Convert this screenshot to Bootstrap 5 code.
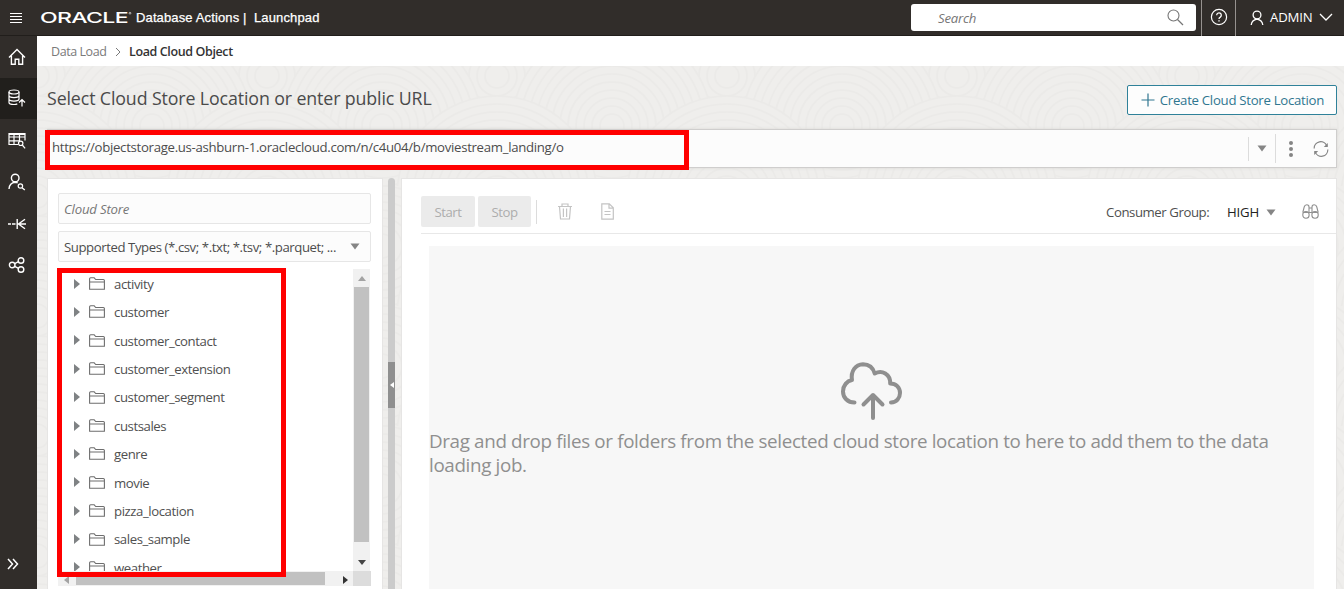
<!DOCTYPE html>
<html lang="en">
<head>
<meta charset="utf-8">
<meta name="viewport" content="width=device-width, initial-scale=1">
<title>Load Cloud Object</title>
<link href="https://cdn.jsdelivr.net/npm/bootstrap@5.3.0/dist/css/bootstrap.min.css" rel="stylesheet">
<style>
  body { font: 13.2px/20px "Open Sans", "Noto Sans", sans-serif; letter-spacing: -.43px; color: #4c4c4c; background: #efeeec; height: 589px; overflow: hidden; }
  svg { display: block; flex: none; fill: none; stroke: currentColor; }
  .topbar { height: 36px; background: #312d2a; color: #fff; border-bottom: 1px solid #211e1b; }
  .brand-text { font: 13px/16px "Liberation Sans", Arial, sans-serif; letter-spacing: .13px; white-space: pre; -webkit-text-stroke: .25px #fff; }
  .search { width: 285px; height: 27px; background: #fff; border-radius: 3px; padding: 0 12px 0 27px; color: #767676; letter-spacing: -.2px; }
  .topcell { border-left: 1px solid #96928f; height: 36px; }
  .rail { width: 37px; background: #312d2a; color: #fff; padding-bottom: 15px; }
  .rail-item { height: 41.6px; padding-right: 4px; }
  .rail-item.current { background: #211f1c; }
  .crumbs { height: 30px; background: #fff; padding-left: 14px; color: #7a7a7a; font-size: 12.5px; line-height: 30px; padding-top: 2px; }
  .crumb-now { color: #333; font-weight: 600; letter-spacing: -.38px; }
  .stage { position: relative; padding: 0 7px 0 10px; }
  .texture { position: absolute; inset: 0; width: 100%; height: 100%; stroke: #ebeae8; z-index: -1; }
  .page-title { font-size: 17.8px; font-weight: 400; line-height: 26px; color: #4a4a4a; margin: 0; letter-spacing: -.12px; }
  .btn-create { width: 210px; height: 30px; border: 1px solid #2f8199; border-radius: 2px; background: #fdfdfd; color: #2f7690; padding: 0 12px 0 13px; font-size: 13.2px; line-height: 20px; letter-spacing: -.28px; }
  .urlbar { position: relative; height: 39px; background: #fcfcfc; border: 1px solid #cfcecd; box-shadow: 0 0 3px #d9d8d6; padding-left: 4px; }
  .url-text { letter-spacing: -.3px; margin-bottom: 3px; }
  .mark-url, .mark-tree { position: absolute; border: 5px solid #f00; pointer-events: none; }
  .mark-url { left: -3px; top: 0; width: 644px; height: 40px; }
  .mark-tree { left: -1px; top: -1px; width: 229px; height: 309px; }
  .rule-v { width: 1px; background: #dcdcdc; }
  .panel { background: #fff; border: 1px solid #e6e5e4; border-bottom: 0; }
  .panel-left { width: 336px; padding: 14px 11px 0 10px; }
  .field { height: 31px; border: 1px solid #e6e6e6; border-radius: 2px; background: #fcfcfc; padding: 0 5px; }
  .tree { position: relative; height: 317px; }
  .tree-list { height: 302px; overflow: hidden; width: 295px; padding-top: .4px; }
  .tree-row { height: 28.4px; padding-left: 16px; color: #505050; }
  .tree-name { padding-top: .6px; }
  .vbar { width: 17px; height: 302px; background: #f1f1f1; color: #a3a3a3; }
  .vthumb { width: 15px; height: 255px; background: #c1c1c1; }
  .hbar { height: 15px; background: #f1f1f1; }
  .hthumb { width: 249px; height: 13px; background: #c1c1c1; }
  .hcorner { width: 18px; height: 15px; background: #dcdcdc; }
  .splitter { width: 7px; background: #cbcbcb; border-radius: 4px 4px 0 0; padding-top: 184px; }
  .grip { height: 46px; background: #8f8f8f; color: #fff; }
  .panel-right { padding-left: 19px; }
  .tools { height: 55px; padding-top: 17px; border-bottom: 1px solid #e8e8e8; }
  .btn-off, .btn-off:disabled { height: 31px; border: 0; border-radius: 2px; padding: 0; background: #ebebeb; color: #adadad; opacity: 1; font-size: 13.2px; line-height: 20px; letter-spacing: -.43px; }
  .dropzone { width: 885px; background: #f7f7f7; margin: 12px 0 0 8px; padding-top: 115px; }
  .drop-text { font-size: 18.8px; line-height: 24px; color: #8f8f8f; letter-spacing: -.34px; }
</style>
</head>
<body class="d-flex flex-column">

<header class="topbar d-flex align-items-center flex-shrink-0">
  <svg width="12" height="12" viewBox="0 0 12 12" style="margin-left:10px"><path d="M0 1.500h12M0 4.500h12M0 7.500h12M0 10.500h12" stroke-width="1.100"/></svg>
  <svg width="92" height="16" viewBox="0 0 92 16" style="margin-left:18px"><text x="0" y="13.200" font-family="Inter, sans-serif" font-size="15" font-weight="500" fill="#fff" stroke="none" textLength="88" lengthAdjust="spacingAndGlyphs">ORACLE</text><circle cx="90" cy="3.200" r=".9" stroke-width=".6"/></svg>
  <span class="brand-text ms-1">Database Actions |  Launchpad</span>
  <div class="search d-flex align-items-center ms-auto"><em>Search</em>
    <svg class="ms-auto" width="17" height="17" viewBox="0 0 17 17"><circle cx="6.500" cy="6.500" r="5.500" stroke-width="1.100"/><path d="m10.500 10.500 5.500 5.500" stroke-width="1.200"/></svg>
  </div>
  <div class="topcell d-flex align-items-center justify-content-center" style="width:34px;margin-left:5px">
    <svg width="18" height="18" viewBox="0 0 18 18" style="margin-bottom:2px"><circle cx="9" cy="9" r="7.600" stroke-width="1.200"/><path d="M6.700 7.200a2.300 2.300 0 1 1 3.600 1.900Q9 9.800 9 11" stroke-width="1.300"/><path d="M9 12.200v1.400" stroke-width="1.400"/></svg>
  </div>
  <div class="topcell d-flex align-items-center" style="width:109px;padding-left:14px">
    <svg width="14" height="16" viewBox="0 0 14 16"><circle cx="7" cy="5" r="3.900" stroke-width="1.300"/><path d="M1.200 15c.4-3.500 2.200-5.300 5.800-5.900M12.800 15c-.4-3.500-2.200-5.300-5.800-5.900" stroke-width="1.300"/></svg>
    <span style="margin:0 0 2px 6px;width:43px;letter-spacing:-.2px">ADMIN</span>
    <svg width="14" height="9" viewBox="0 0 14 9" style="margin-left:6px"><path d="m1 1 6 6 6-6" stroke-width="1.300"/></svg>
  </div>
</header>

<div class="d-flex flex-fill" style="min-height:0">
  <nav class="rail d-flex flex-column flex-shrink-0">
    <div class="rail-item d-flex align-items-center justify-content-center">
      <svg width="18" height="18" viewBox="0 0 18 18" stroke-width="1.400"><path d="M1 9.500 9 1.500l8 8M3.400 7.700v8.500h3.800v-5h3.600v5h3.800V7.700"/></svg></div>
    <div class="rail-item current d-flex align-items-center justify-content-center">
      <svg width="18" height="18" viewBox="0 0 18 18" stroke-width="1.200"><ellipse cx="6" cy="3" rx="5" ry="2"/><path d="M1 3v10.500c0 1.300 2.200 2 5 2 1.300 0 2.500-.2 3.300-.6M11 3v7M1 6.500c0 2.700 10 2.700 10 0M1 10c0 2.700 10 2.700 10 0M14 17.500V11M11 13.500l3-3 3 3"/></svg></div>
    <div class="rail-item d-flex align-items-center justify-content-center">
      <svg width="18" height="18" viewBox="0 0 18 18" stroke-width="1.200" style="margin-top:2px"><path d="M10 12.500H1V1.500h16v7M1 5h16M1 8.800h10M6 1.500v11M11.500 1.500V9"/><path d="M1 2.300h16" stroke-width="1.500"/><circle cx="12.700" cy="11.300" r="2.200"/><path d="m14.300 13 2.800 3.400"/></svg></div>
    <div class="rail-item d-flex align-items-center justify-content-center">
      <svg width="18" height="18" viewBox="0 0 18 18" stroke-width="1.400"><circle cx="7.200" cy="5" r="3.800"/><path d="M1 16c.3-4 2.300-6.300 6.200-6.700 1 0 1.700.2 2.500.5"/><circle cx="12.400" cy="13" r="2.200" stroke-width="1.200"/><path d="m14 14.700 2.800 2.300"/></svg></div>
    <div class="rail-item d-flex align-items-center justify-content-center">
      <svg width="18" height="18" viewBox="0 0 18 18" stroke-width="1.400" style="margin-top:2px"><path d="M0 9h3M4 9h3.500M8.500 9H18M9.200 4v10M17 4.200 10.500 9l6.500 4.800"/></svg></div>
    <div class="rail-item d-flex align-items-center justify-content-center">
      <svg width="18" height="18" viewBox="0 0 18 18" stroke-width="1.400"><circle cx="4.200" cy="9" r="2.800"/><circle cx="13" cy="4.500" r="2.800"/><circle cx="13" cy="13.500" r="2.800"/><path d="m6.700 7.700 3.800-2M6.700 10.300l3.800 2"/></svg></div>
    <svg class="mt-auto" width="12" height="12" viewBox="0 0 12 12" stroke-width="1.500" style="margin:4px 0 4px 7px"><path d="m1 1 4.500 5L1 11M6 1l4.500 5L6 11"/></svg>
  </nav>

  <main class="d-flex flex-column flex-fill" style="min-width:0">
    <div class="crumbs d-flex align-items-center flex-shrink-0">
      <span style="width:55px;white-space:nowrap">Data Load</span>
      <svg width="6" height="10" viewBox="0 0 6 10" style="margin:0 8px 0 9px"><path d="m1 1 4 4-4 4"/></svg>
      <span class="crumb-now">Load Cloud Object</span>
    </div>

    <div class="stage d-flex flex-column flex-fill" style="min-height:0;z-index:0">
      <svg class="texture"><defs>
        <g id="rings"><circle r="100" fill="#efeeec"/><circle r="92"/><circle r="84"/><circle r="76"/><circle r="68"/><circle r="60"/><circle r="52"/><circle r="44"/><circle r="36"/><circle r="28"/><circle r="20"/><circle r="12"/></g>
        <pattern id="waves" width="230" height="120" patternUnits="userSpaceOnUse" stroke-width="1.600"><use href="#rings" x="0" y="10"/><use href="#rings" x="230" y="10"/><use href="#rings" x="115" y="60"/><use href="#rings" x="0" y="130"/><use href="#rings" x="230" y="130"/></pattern></defs>
        <rect width="100%" height="100%" fill="url(#waves)" stroke="none"/></svg>

      <div class="d-flex align-items-start justify-content-between flex-shrink-0" style="height:63px;padding-top:19px">
        <h1 class="page-title">Select Cloud Store Location or enter public URL</h1>
        <button class="btn btn-create d-flex align-items-center justify-content-between">
          <svg width="14" height="14" viewBox="0 0 14 14"><path d="M7 .5v13M.5 7h13" stroke-width="1.200"/></svg><span class="text-nowrap">Create Cloud Store Location</span></button>
      </div>

      <div class="urlbar d-flex align-items-center flex-shrink-0">
        <span class="url-text">https://objectstorage.us-ashburn-1.oraclecloud.com/n/c4u04/b/moviestream_landing/o</span>
        <div class="d-flex align-items-center ms-auto" style="color:#858585">
          <span class="rule-v" style="height:24px"></span>
          <svg width="10" height="7" viewBox="0 0 10 7" style="margin:0 8px"><path d="M.5.500h9L5 6.500z" fill="currentColor" stroke="none"/></svg>
          <span class="rule-v" style="height:29px"></span>
          <svg width="4" height="16" viewBox="0 0 4 16" style="margin:0 20px 0 13px"><g fill="currentColor" stroke="none"><circle cx="2" cy="2" r="2"/><circle cx="2" cy="8" r="2"/><circle cx="2" cy="14" r="2"/></g></svg>
          <svg width="16" height="16" viewBox="0 0 16 16" style="margin-right:7px"><path d="M1.200 7.500A6.500 6.500 0 0 1 13.800 5M14.800 8.500A6.500 6.500 0 0 1 2.200 11" stroke-width="1.200"/><path d="M14.800 2V6H10.800zM1.200 14V10H5.200z" fill="currentColor" stroke="none"/></svg>
        </div>
        <div class="mark-url"></div>
      </div>

      <div class="d-flex flex-fill" style="margin-top:10px;min-height:0">
        <section class="panel panel-left flex-shrink-0">
          <div class="field d-flex align-items-center" style="color:#767676;letter-spacing:-.2px"><em>Cloud Store</em></div>
          <div class="field d-flex align-items-center justify-content-between" style="margin-top:7px;padding-right:10px"><span class="text-nowrap">Supported Types (*.csv; *.txt; *.tsv; *.parquet; ...</span>
            <svg width="10" height="7" viewBox="0 0 10 7" style="color:#858585"><path d="M.5.500h9L5 6.500z" fill="currentColor" stroke="none"/></svg></div>
          <div class="tree" style="margin-top:7px">
            <div class="d-flex">
              <div class="tree-list" id="folders"></div>
              <div class="vbar d-flex flex-column align-items-center">
                <svg width="8" height="5" viewBox="0 0 8 5" style="margin:7px 0 6px"><path d="M0 5 4 0l4 5z" fill="currentColor" stroke="none"/></svg>
                <div class="vthumb"></div>
                <svg width="8" height="5" viewBox="0 0 8 5" style="margin-top:18px;color:#444"><path d="M0 0h8L4 5z" fill="currentColor" stroke="none"/></svg>
              </div>
            </div>
            <div class="hbar d-flex align-items-center">
              <svg width="5" height="8" viewBox="0 0 5 8" style="margin:3px 7px 0 6px;color:#a3a3a3"><path d="M5 0v8L0 4z" fill="currentColor" stroke="none"/></svg>
              <div class="hthumb"></div>
              <svg width="5" height="8" viewBox="0 0 5 8" style="margin:3px auto 0 18px;color:#333"><path d="M0 0v8l5-4z" fill="currentColor" stroke="none"/></svg>
              <div class="hcorner"></div>
            </div>
            <div class="mark-tree"></div>
          </div>
        </section>

        <div class="splitter flex-shrink-0" style="margin:0 6px 0 5px"><div class="grip d-flex align-items-center justify-content-center"><svg width="4" height="6" viewBox="0 0 4 6"><path d="M4 0v6L0 3z" fill="currentColor" stroke="none"/></svg></div></div>

        <section class="panel panel-right d-flex flex-column flex-fill" style="min-width:0">
          <div class="tools d-flex align-items-start flex-shrink-0">
            <button class="btn btn-off" disabled style="width:54px">Start</button>
            <button class="btn btn-off" disabled style="width:53px;margin-left:3px">Stop</button>
            <div class="d-flex align-items-center flex-fill" style="height:32px;color:#c4c4c4">
              <span class="rule-v" style="height:24px;margin-left:5px"></span>
              <svg width="14" height="17" viewBox="0 0 14 17" style="margin:0 0 1px 21px" stroke-width="1.200"><path d="M0 3.500h14M4 3.200V1h6v2.200M1.500 3.500 2.500 16h9l1-12.500M5.400 5.500v8.500M8.600 5.500v8.500"/></svg>
              <svg width="13" height="17" viewBox="0 0 13 17" style="margin:0 0 1px 29px" stroke-width="1.200"><path d="M.8.8h7.500l4 4v11.400H.8zM8 .8v4.400h4.300M3.500 8.500h6M3.500 11.500h6"/></svg>
              <span class="ms-auto text-nowrap" style="color:#4f4f4f;width:104px">Consumer Group:</span>
              <span style="color:#222;margin-left:17px;width:31px;letter-spacing:-.2px">HIGH</span>
              <svg width="10" height="7" viewBox="0 0 10 7" style="margin-left:8px;color:#858585"><path d="M.5.500h9L5 6.500z" fill="currentColor" stroke="none"/></svg>
              <svg width="17" height="15" viewBox="0 0 17 15" style="margin:0 17px 2px 26px;color:#909090" stroke-width="1.100"><path d="M.8 8.500 2.200 3C2.600 1.300 3.500.8 4.800.8S7 1.500 7 3v5.500M16.200 8.500 14.800 3C14.400 1.300 13.500.8 12.200.8S10 1.500 10 3v5.500M7 4h3M7 8.500h3M.8 8.500h6.400M9.800 8.500h6.400"/><rect x=".8" y="7.500" width="6.300" height="6.700" rx="3"/><rect x="9.900" y="7.500" width="6.300" height="6.700" rx="3"/></svg>
            </div>
          </div>
          <div class="dropzone flex-fill">
            <svg width="62" height="60" viewBox="0 0 62 60" style="color:#8f8f8f;margin-left:411px" stroke-width="4" stroke-linecap="round" stroke-linejoin="round"><path d="M14.500 41.500C7.500 41.500 3 36.500 3 30.500 3 24.500 7 20 12 19 10.500 10 15.500 3.500 23 3.200c6 0 10 3.300 11.700 9.300C42 8.500 50.500 13 50.200 22.500 56 22.500 60 26.500 60 32c0 5-3.500 9.300-9 9.500M33 57V34M23.500 43.500 33 34l9.500 9.500"/></svg>
            <p class="drop-text mb-0" style="margin-top:8px">Drag and drop files or folders from the selected cloud store location to here to add them to the data loading job.</p>
          </div>
        </section>
      </div>
    </div>
  </main>
</div>

<script>
  const names = ["activity", "customer", "customer_contact", "customer_extension", "customer_segment", "custsales", "genre", "movie", "pizza_location", "sales_sample", "weather"];
  document.getElementById("folders").innerHTML = names.map(n => `
    <div class="tree-row d-flex align-items-center">
      <svg width="6" height="10" viewBox="0 0 6 10" style="color:#7f8284"><path d="M0 0v10l6-5z" fill="currentColor" stroke="none"/></svg>
      <svg width="16" height="13" viewBox="0 0 16 13" style="margin:0 9px;color:#6e6e6e"><path d="M.6 12.200V1.800q0-1 1-1h3.600l1.500 1.700h7.700q1 0 1 1v8.700zM.6 5h14.800" stroke-width="1.100"/></svg>
      <span class="tree-name">${n}</span>
    </div>`).join("");
</script>
<script src="https://cdn.jsdelivr.net/npm/bootstrap@5.3.0/dist/js/bootstrap.bundle.min.js"></script>
</body>
</html>
